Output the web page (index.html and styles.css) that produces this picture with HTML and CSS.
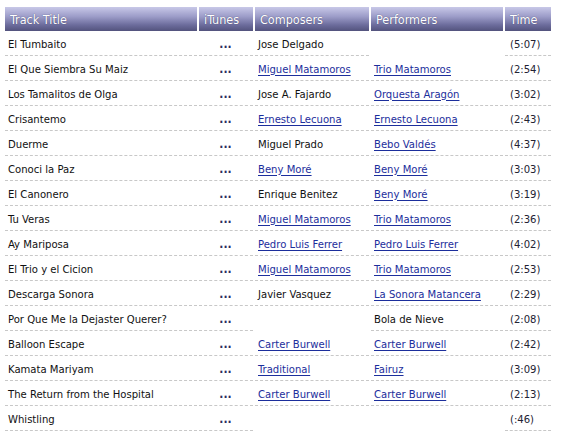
FILE: index.html
```html
<!DOCTYPE html>
<html>
<head>
<meta charset="utf-8">
<link rel="stylesheet" href="styles.css">
</head>
<body>
<table class="tracks">
  <colgroup>
    <col class="c-title"><col class="c-itunes"><col class="c-comp"><col class="c-perf"><col class="c-time">
  </colgroup>
  <thead>
    <tr><th>Track Title</th><th>iTunes</th><th>Composers</th><th>Performers</th><th>Time</th></tr>
  </thead>
  <tbody>
    <tr><td>El Tumbaito</td><td class="dots">...</td><td>Jose Delgado</td><td></td><td class="time">(5:07)</td></tr>
    <tr><td>El Que Siembra Su Maiz</td><td class="dots">...</td><td><a href="#">Miguel Matamoros</a></td><td><a href="#">Trio Matamoros</a></td><td class="time">(2:54)</td></tr>
    <tr><td>Los Tamalitos de Olga</td><td class="dots">...</td><td>Jose A. Fajardo</td><td><a href="#">Orquesta Aragón</a></td><td class="time">(3:02)</td></tr>
    <tr><td>Crisantemo</td><td class="dots">...</td><td><a href="#">Ernesto Lecuona</a></td><td><a href="#">Ernesto Lecuona</a></td><td class="time">(2:43)</td></tr>
    <tr><td>Duerme</td><td class="dots">...</td><td>Miguel Prado</td><td><a href="#">Bebo Valdés</a></td><td class="time">(4:37)</td></tr>
    <tr><td>Conoci la Paz</td><td class="dots">...</td><td><a href="#">Beny Moré</a></td><td><a href="#">Beny Moré</a></td><td class="time">(3:03)</td></tr>
    <tr><td>El Canonero</td><td class="dots">...</td><td>Enrique Benitez</td><td><a href="#">Beny Moré</a></td><td class="time">(3:19)</td></tr>
    <tr><td>Tu Veras</td><td class="dots">...</td><td><a href="#">Miguel Matamoros</a></td><td><a href="#">Trio Matamoros</a></td><td class="time">(2:36)</td></tr>
    <tr><td>Ay Mariposa</td><td class="dots">...</td><td><a href="#">Pedro Luis Ferrer</a></td><td><a href="#">Pedro Luis Ferrer</a></td><td class="time">(4:02)</td></tr>
    <tr><td>El Trio y el Cicion</td><td class="dots">...</td><td><a href="#">Miguel Matamoros</a></td><td><a href="#">Trio Matamoros</a></td><td class="time">(2:53)</td></tr>
    <tr><td>Descarga Sonora</td><td class="dots">...</td><td>Javier Vasquez</td><td><a href="#">La Sonora Matancera</a></td><td class="time">(2:29)</td></tr>
    <tr><td>Por Que Me la Dejaster Querer?</td><td class="dots">...</td><td></td><td>Bola de Nieve</td><td class="time">(2:08)</td></tr>
    <tr><td>Balloon Escape</td><td class="dots">...</td><td><a href="#">Carter Burwell</a></td><td><a href="#">Carter Burwell</a></td><td class="time">(2:42)</td></tr>
    <tr><td>Kamata Mariyam</td><td class="dots">...</td><td><a href="#">Traditional</a></td><td><a href="#">Fairuz</a></td><td class="time">(3:09)</td></tr>
    <tr><td>The Return from the Hospital</td><td class="dots">...</td><td><a href="#">Carter Burwell</a></td><td><a href="#">Carter Burwell</a></td><td class="time">(2:13)</td></tr>
    <tr><td>Whistling</td><td class="dots">...</td><td></td><td></td><td class="time">(:46)</td></tr>
  </tbody>
</table>
</body>
</html>
```
FILE: styles.css
```css
html, body {
  margin: 0;
  padding: 0;
  background: #ffffff;
}
body {
  font-family: "DejaVu Sans Condensed", "DejaVu Sans", sans-serif;
  font-size: 11.2px;
  color: #111111;
}
.tracks {
  margin: 5px 0 0 3px;
  width: 550px;
  table-layout: fixed;
  border-collapse: separate;
  border-spacing: 2px;
  empty-cells: hide;
}
.c-title { width: 192px; }
.c-itunes { width: 54px; }
.c-comp { width: 114px; }
.c-perf { width: 132px; }
.c-time { width: 46px; }
.tracks th {
  height: 24px;
  padding: 0 4px 0 5px;
  text-align: left;
  font-weight: normal;
  font-size: 12.5px;
  color: #ffffff;
  text-shadow: 0 0 1px #3a3a66;
  background: linear-gradient(to bottom, #c8c8e8 0%, #9c9cc8 40%, #6c6c9c 75%, #53537d 100%);
  white-space: nowrap;
  overflow: hidden;
}
.tracks td {
  height: 22px;
  padding: 0 4px 0 3px;
  border-bottom: 1px dashed #c8c8c8;
  white-space: nowrap;
  vertical-align: middle;
}
.tracks td.dots {
  text-align: center;
  font-weight: bold;
  font-size: 12px;
  color: #2c2c5c;
}
.tracks td.time {
  padding-left: 5px;
  color: #222233;
}
.tracks a {
  color: #1c2e9c;
  text-decoration: underline;
  text-underline-offset: 2px;
}
```
